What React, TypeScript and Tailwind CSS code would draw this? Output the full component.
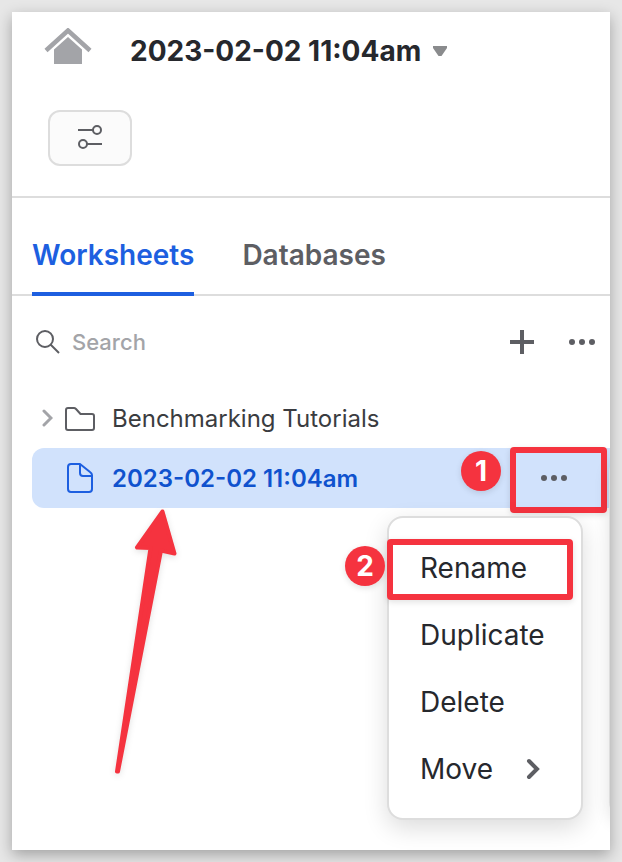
import React from "react";

function Dots({ className }: { className: string }) {
  return (
    <svg className={className} width="26" height="6" viewBox="0 0 26 6" fill="currentColor" aria-hidden="true">
      <circle cx="3" cy="3" r="3" />
      <circle cx="13" cy="3" r="3" />
      <circle cx="23" cy="3" r="3" />
    </svg>
  );
}

function Badge({ children, className }: { children: React.ReactNode; className: string }) {
  return (
    <span
      className={`absolute z-20 flex size-10 items-center justify-center rounded-full bg-[#f5333f] text-[28px] leading-9 font-bold text-white shadow-[0_2px_6px_rgba(0,0,0,0.12)] ${className}`}
    >
      {children}
    </span>
  );
}

function Header() {
  return (
    <header className="border-b-2 border-[#dddddd] pt-4 pb-[30px]">
      <div className="flex items-center pl-8">
        <a href="#home" aria-label="Home" className="mr-[38px] text-[#a3a4a8]">
          <svg width="48" height="46" viewBox="0 0 48 46" aria-hidden="true">
            <path d="M2 22.500L24 2.500L46 22.500" fill="none" stroke="currentColor" strokeWidth="4.500" />
            <path d="M10 21.500L24 9L38 21.500V36H10Z" fill="currentColor" />
          </svg>
        </a>
        <button type="button" className="flex items-center gap-3 text-[28px] leading-9 font-bold text-[#26282d]">
          2023-02-02 11:04am
          <svg width="14" height="10" viewBox="0 0 14 10" fill="#8a8b8d" aria-hidden="true">
            <path d="M0 0H14V2L8.500 10H5.500L0 2Z" />
          </svg>
        </button>
      </div>
      <button
        type="button"
        aria-label="Filters"
        className="mt-9 ml-9 flex h-14 w-21 items-center justify-center rounded-xl border-2 border-[#dddddd] bg-[#fbfbfb] text-[#5d5e63]"
      >
        <svg width="24" height="26" viewBox="0 0 24 26" fill="none" stroke="currentColor" strokeWidth="2" aria-hidden="true">
          <path d="M0 5H15M9 19H24" />
          <circle cx="19" cy="5" r="4" />
          <circle cx="5" cy="19" r="4" />
        </svg>
      </button>
    </header>
  );
}

function Tabs() {
  return (
    <div role="tablist" className="flex gap-12 border-b-2 border-[#dddddd] px-5 text-[28px] leading-9 font-semibold">
      <button type="button" role="tab" aria-selected="true" className="-mb-0.5 border-b-4 border-[#1d5fe0] pt-[39px] pb-[19px] text-[#1d5fe0]">
        Worksheets
      </button>
      <button type="button" role="tab" aria-selected="false" className="-mb-0.5 border-b-4 border-transparent pt-[39px] pb-[19px] text-[#5d5e63]">
        Databases
      </button>
    </div>
  );
}

function SearchBar() {
  return (
    <div className="flex h-23 items-center pr-[15px] pl-6 text-[#5d5e63]">
      <label htmlFor="search" className="mr-3">
        <svg width="24" height="24" viewBox="0 0 24 24" fill="none" stroke="currentColor" strokeWidth="2" aria-hidden="true">
          <circle cx="9" cy="9" r="8" />
          <path d="M14.500 14.500L23 23" />
        </svg>
      </label>
      <input
        id="search"
        type="text"
        aria-label="Search"
        placeholder="Search"
        className="min-w-0 flex-1 bg-transparent text-[22px] leading-8 font-medium placeholder-[#a3a4a8] outline-none"
      />
      <button type="button" aria-label="Add" className="mr-[35px]">
        <svg className="block" width="24" height="24" viewBox="0 0 24 24" stroke="currentColor" strokeWidth="4" aria-hidden="true">
          <path d="M12 0V24M0 12H24" />
        </svg>
      </button>
      <button type="button" aria-label="More">
        <Dots className="block" />
      </button>
    </div>
  );
}

function ContextMenu() {
  const item = "flex h-[67px] w-full items-center px-[31px] text-left";
  return (
    <div className="absolute top-[68px] right-[27px] z-10 w-49 rounded-2xl border-2 border-[#dddddd] bg-white py-4 text-[28px] leading-9 text-[#26282d] shadow-[0_8px_24px_rgba(0,0,0,0.14)]">
      <div className="relative">
        <button type="button" className={item}>Rename</button>
        <span className="pointer-events-none absolute top-[5px] -left-0.5 h-[61px] w-[186px] rounded-sm border-6 border-[#f5333f] shadow-[0_2px_6px_rgba(0,0,0,0.12)]" />
        <Badge className="top-3 -left-11">2</Badge>
      </div>
      <button type="button" className={item}>Duplicate</button>
      <button type="button" className={item}>Delete</button>
      <button type="button" className={`${item} justify-between`}>
        Move
        <svg className="mr-2.5" width="14" height="22" viewBox="0 0 14 22" fill="none" stroke="#5d5e63" strokeWidth="4" strokeLinecap="round" aria-hidden="true">
          <path d="M3 3L11 11L3 19" />
        </svg>
      </button>
    </div>
  );
}

function Arrow() {
  return (
    <svg
      className="pointer-events-none absolute top-15 left-20 drop-shadow-[0_2px_3px_rgba(0,0,0,0.12)]"
      width="70"
      height="270"
      viewBox="0 0 70 270"
      fill="#f5333f"
      stroke="#f5333f"
      strokeWidth="4"
      strokeLinejoin="round"
      aria-hidden="true"
    >
      <path d="M50.500 3.500L25 39.500L38.500 40L5 263.500L6 263.500L49 42.500L62.500 45.500Z" />
    </svg>
  );
}

function Tree() {
  return (
    <ul className="pl-5 text-2xl">
      <li>
        <button type="button" className="flex h-15 w-full items-center pt-0.5 pl-2.5 text-left text-[#3a3c40]">
          <svg className="mr-3 mb-0.5" width="11" height="18" viewBox="0 0 11 18" fill="none" stroke="#a3a4a8" strokeWidth="3" strokeLinecap="round" aria-hidden="true">
            <path d="M2 2L9 9L2 16" />
          </svg>
          <svg className="mr-[17px]" width="30" height="24" viewBox="0 0 30 24" fill="none" stroke="#5d5e63" strokeWidth="2" strokeLinejoin="round" aria-hidden="true">
            <path d="M3 1H9Q10 1 11 2L15.500 7H27Q29 7 29 9V21Q29 23 27 23H3Q1 23 1 21V3Q1 1 3 1Z" />
          </svg>
          Benchmarking Tutorials
        </button>
      </li>
      <li className="relative flex h-15 items-center rounded-l-xl bg-[#d1e2fc] pr-[43px]">
        <a href="#worksheet" className="flex flex-1 items-center pl-[35px] font-semibold text-[#0f52ce]">
          <svg className="mr-[19px]" width="26" height="30" viewBox="0 0 26 30" fill="none" stroke="#1d5fe0" strokeWidth="2" strokeLinejoin="round" aria-hidden="true">
            <path d="M4 1H13L23 9Q25 10.500 25 12V26Q25 29 22 29H4Q1 29 1 26V4Q1 1 4 1Z" />
            <path d="M13 1V10Q13 13 16 13H25" />
          </svg>
          <span className="pt-0.5">2023-02-02 11:04am</span>
        </a>
        <Badge className="top-[3px] right-[109px]">1</Badge>
        <button type="button" aria-label="Worksheet actions" className="text-[#5d5e63]">
          <Dots className="block" />
        </button>
        <span className="pointer-events-none absolute -top-px right-[3px] h-[66px] w-[97px] rounded-sm border-6 border-[#f5333f] shadow-[0_2px_6px_rgba(0,0,0,0.12)]" />
        <span className="pointer-events-none absolute top-2 -right-[15px] h-[362px] w-4 rounded-l-2xl bg-[#dddddd] shadow-[0_6px_16px_rgba(0,0,0,0.12)]" />
        <ContextMenu />
        <Arrow />
      </li>
    </ul>
  );
}

export default function App() {
  return (
    <div className="flex min-h-screen bg-[#e7e7e7] p-3 font-['Inter',sans-serif]">
      <div className="flex min-w-0 flex-1 shadow-[0_5px_14px_rgba(0,0,0,0.3)]">
        <main className="min-w-0 flex-1 overflow-x-clip bg-white">
          <Header />
          <Tabs />
          <SearchBar />
          <Tree />
        </main>
      </div>
    </div>
  );
}
